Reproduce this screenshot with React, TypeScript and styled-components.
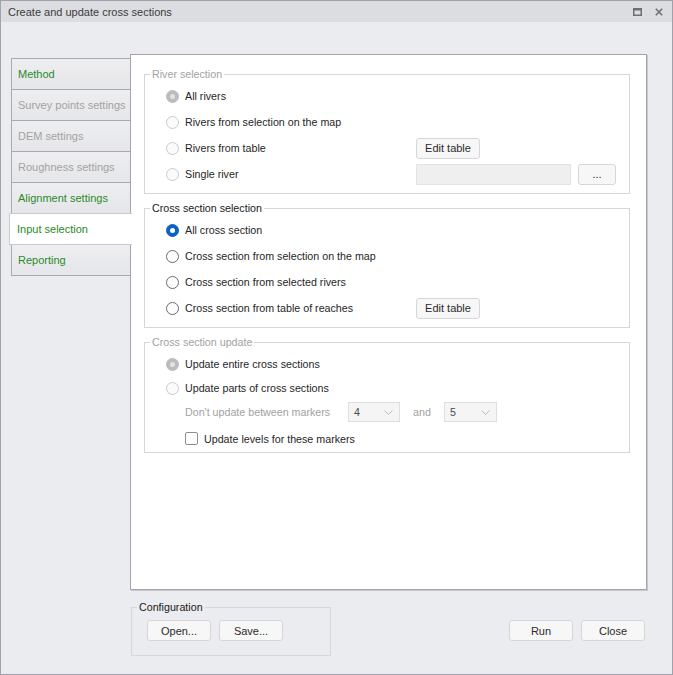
import React from "react";
import styled, { createGlobalStyle } from "styled-components";

const GlobalStyle = createGlobalStyle`
  html, body {
    margin: 0;
    padding: 0;
    background: #ffffff;
  }
  body {
    font-family: "Liberation Sans", Arial, sans-serif;
    font-size: 10.7px;
    color: #1f1f1f;
  }
`;

const GREEN = "#2a8a2a";
const MUTED = "#a2a2a2";
const TEXT = "#262626";

// Window frame

const Window = styled.div`
  width: 673px;
  height: 675px;
  box-sizing: border-box;
  border: 1px solid #a0a1a9;
  background: #ebecef;
  display: flex;
  flex-direction: column;
`;

const TitleBar = styled.div`
  height: 21px;
  display: flex;
  align-items: center;
  padding: 0 9px 0 7px;
  background: #dcdde1;
  color: #3b3b3b;
  font-size: 11px;
`;

const Title = styled.span`
  flex: 1;
`;

const TitleButtons = styled.div`
  display: flex;
  align-items: center;
  gap: 13px;
`;

const Body = styled.div`
  flex: 1;
  display: flex;
  flex-direction: column;
  padding: 32px 0 0 10px;
`;

// Tabs + page

const TabArea = styled.div`
  display: flex;
  align-items: flex-start;
`;

const TabList = styled.div`
  width: 120px;
  padding-top: 4px;
  display: flex;
  flex-direction: column;
`;

const Tab = styled.div<{ $active?: boolean; $enabled?: boolean }>`
  height: 32px;
  box-sizing: border-box;
  margin-top: -1px;
  line-height: 30px;
  white-space: nowrap;
  font-size: 11px;
  border: 1px solid #a8a9b1;
  color: ${(p) => (p.$enabled ? GREEN : MUTED)};
  background: ${(p) =>
    p.$active ? "#ffffff" : "linear-gradient(#eeeef1, #e5e6e9)"};
  padding-left: ${(p) => (p.$active ? "7px" : "6px")};
  ${(p) =>
    p.$active &&
    `
    position: relative;
    z-index: 1;
    margin-left: -2px;
    width: 123px;
    border-right: none;
    border-color: #c9cad0;
  `}
  &:first-child {
    margin-top: 0;
  }
`;

const Page = styled.div`
  position: relative;
  width: 517px;
  height: 536px;
  box-sizing: border-box;
  margin-left: -1px;
  background: #ffffff;
  border: 1px solid #a3a4ad;
  box-shadow: 1px 1px 0 #c7c8ce;
  padding: 12px 16px 0 13px;
  display: flex;
  flex-direction: column;
  gap: 7px;
`;

// Group boxes

const Group = styled.fieldset<{ $pt?: number; $pb?: number }>`
  margin: 0;
  min-width: 0;
  border: 1px solid #d7d7d9;
  padding: ${(p) => p.$pt ?? 2}px 0 ${(p) => p.$pb ?? 6}px 0;
`;

const Legend = styled.legend<{ $muted?: boolean }>`
  margin-left: 5px;
  padding: 0 2px;
  line-height: 14px;
  color: ${(p) => (p.$muted ? MUTED : "#1a1a1a")};
`;

const Row = styled.div<{ $h?: number; $indent?: number }>`
  height: ${(p) => p.$h ?? 26}px;
  display: flex;
  align-items: center;
  padding-left: ${(p) => p.$indent ?? 21}px;
`;

const Choice = styled.label<{ $w?: number }>`
  display: flex;
  align-items: center;
  gap: 6px;
  width: ${(p) => (p.$w ? `${p.$w}px` : "auto")};
  color: ${TEXT};
  white-space: nowrap;
`;

const RadioMark = styled.span<{ $on?: boolean; $muted?: boolean }>`
  width: 13px;
  height: 13px;
  box-sizing: border-box;
  border-radius: 50%;
  flex-shrink: 0;
  position: relative;
  border: 1px solid
    ${(p) =>
      p.$on ? (p.$muted ? "#bcbcbc" : "#0c62c2") : p.$muted ? "#cacaca" : "#6a6a6a"};
  background: ${(p) =>
    p.$on ? (p.$muted ? "#bcbcbc" : "#0c62c2") : p.$muted ? "#fbfbfb" : "#ffffff"};
  &::after {
    content: "";
    display: ${(p) => (p.$on ? "block" : "none")};
    position: absolute;
    left: 3px;
    top: 3px;
    width: 5px;
    height: 5px;
    border-radius: 50%;
    background: ${(p) => (p.$muted ? "#e2e2e2" : "#ffffff")};
  }
`;

const CheckMark = styled.span`
  width: 13px;
  height: 13px;
  box-sizing: border-box;
  border: 1px solid #8e8e8e;
  border-radius: 2px;
  background: #ffffff;
  flex-shrink: 0;
`;

const Button = styled.button<{ $w?: number }>`
  width: ${(p) => p.$w ?? 64}px;
  height: 21px;
  padding: 0;
  border: 1px solid #d6d6d9;
  border-radius: 3px;
  background: #f7f7f7;
  color: #2b2b2b;
  font-family: inherit;
  font-size: 11px;
`;

const TextField = styled.div`
  width: 155px;
  height: 21px;
  box-sizing: border-box;
  border: 1px solid #e3e3e3;
  background: #efefef;
  margin-right: 7px;
`;

const Caption = styled.span<{ $w?: number }>`
  width: ${(p) => (p.$w ? `${p.$w}px` : "auto")};
  color: ${MUTED};
  white-space: nowrap;
`;

const Combo = styled.div<{ $w: number }>`
  width: ${(p) => p.$w}px;
  height: 20px;
  box-sizing: border-box;
  border: 1px solid #dedee0;
  background: #f5f5f5;
  display: flex;
  align-items: center;
  justify-content: space-between;
  padding: 0 6px 0 5px;
  color: #4a4a4a;
  margin: 0 13px;
  &:first-of-type {
    margin-left: 0;
  }
`;

// Bottom bar

const BottomRow = styled.div`
  display: flex;
  align-items: flex-start;
  margin-top: 10px;
  padding-right: 27px;
`;

const ConfigGroup = styled.fieldset`
  margin: 0 0 0 120px;
  width: 200px;
  height: 56px;
  box-sizing: border-box;
  min-width: 0;
  border: 1px solid #d7d7d9;
  padding: 6px 0 0 0;
`;

const ButtonRow = styled.div`
  display: flex;
  gap: 8px;
  padding-left: 15px;
`;

const Actions = styled.div`
  margin-left: auto;
  margin-top: 20px;
  display: flex;
  gap: 8px;
`;

const tabs = [
  { label: "Method", enabled: true },
  { label: "Survey points settings", enabled: false },
  { label: "DEM settings", enabled: false },
  { label: "Roughness settings", enabled: false },
  { label: "Alignment settings", enabled: true },
  { label: "Input selection", enabled: true, active: true },
  { label: "Reporting", enabled: true },
];

const Chevron = () => (
  <svg width="9" height="5" viewBox="0 0 9 5">
    <path d="M0.5 0.5 L4.5 4.5 L8.5 0.5" fill="none" stroke="#bdbdbd" strokeWidth="1" />
  </svg>
);

const App: React.FC = () => (
  <>
    <GlobalStyle />
    <Window>
      <TitleBar>
        <Title>Create and update cross sections</Title>
        <TitleButtons>
          <svg width="9" height="8" viewBox="0 0 9 8">
            <rect x="0.75" y="0.75" width="7.5" height="6.5" fill="none" stroke="#6d6e76" strokeWidth="1.5" />
            <rect x="0" y="0" width="9" height="2.5" fill="#6d6e76" />
          </svg>
          <svg width="8" height="8" viewBox="0 0 8 8">
            <path d="M0.8 0.8 L7.2 7.2 M7.2 0.8 L0.8 7.2" stroke="#6d6e76" strokeWidth="1.6" />
          </svg>
        </TitleButtons>
      </TitleBar>

      <Body>
        <TabArea>
          <TabList>
            {tabs.map((t) => (
              <Tab key={t.label} $enabled={t.enabled} $active={t.active}>
                {t.label}
              </Tab>
            ))}
          </TabList>

          <Page>
            <Group>
              <Legend $muted>River selection</Legend>
              <Row>
                <Choice>
                  <RadioMark $on $muted />
                  All rivers
                </Choice>
              </Row>
              <Row>
                <Choice>
                  <RadioMark $muted />
                  Rivers from selection on the map
                </Choice>
              </Row>
              <Row>
                <Choice $w={250}>
                  <RadioMark $muted />
                  Rivers from table
                </Choice>
                <Button>Edit table</Button>
              </Row>
              <Row>
                <Choice $w={250}>
                  <RadioMark $muted />
                  Single river
                </Choice>
                <TextField />
                <Button $w={38}>...</Button>
              </Row>
            </Group>

            <Group $pt={2}>
              <Legend>Cross section selection</Legend>
              <Row>
                <Choice>
                  <RadioMark $on />
                  All cross section
                </Choice>
              </Row>
              <Row>
                <Choice>
                  <RadioMark />
                  Cross section from selection on the map
                </Choice>
              </Row>
              <Row>
                <Choice>
                  <RadioMark />
                  Cross section from selected rivers
                </Choice>
              </Row>
              <Row>
                <Choice $w={250}>
                  <RadioMark />
                  Cross section from table of reaches
                </Choice>
                <Button>Edit table</Button>
              </Row>
            </Group>

            <Group $pt={2} $pb={0}>
              <Legend $muted>Cross section update</Legend>
              <Row>
                <Choice>
                  <RadioMark $on $muted />
                  Update entire cross sections
                </Choice>
              </Row>
              <Row $h={22}>
                <Choice>
                  <RadioMark $muted />
                  Update parts of cross sections
                </Choice>
              </Row>
              <Row $indent={40}>
                <Caption $w={163}>Don't update between markers</Caption>
                <Combo $w={52}>
                  4
                  <Chevron />
                </Combo>
                <Caption $w={18}>and</Caption>
                <Combo $w={53}>
                  5
                  <Chevron />
                </Combo>
              </Row>
              <Row $h={27} $indent={40}>
                <Choice>
                  <CheckMark />
                  Update levels for these markers
                </Choice>
              </Row>
            </Group>
          </Page>
        </TabArea>

        <BottomRow>
          <ConfigGroup>
            <Legend>Configuration</Legend>
            <ButtonRow>
              <Button>Open...</Button>
              <Button>Save...</Button>
            </ButtonRow>
          </ConfigGroup>
          <Actions>
            <Button>Run</Button>
            <Button>Close</Button>
          </Actions>
        </BottomRow>
      </Body>
    </Window>
  </>
);

export default App;
